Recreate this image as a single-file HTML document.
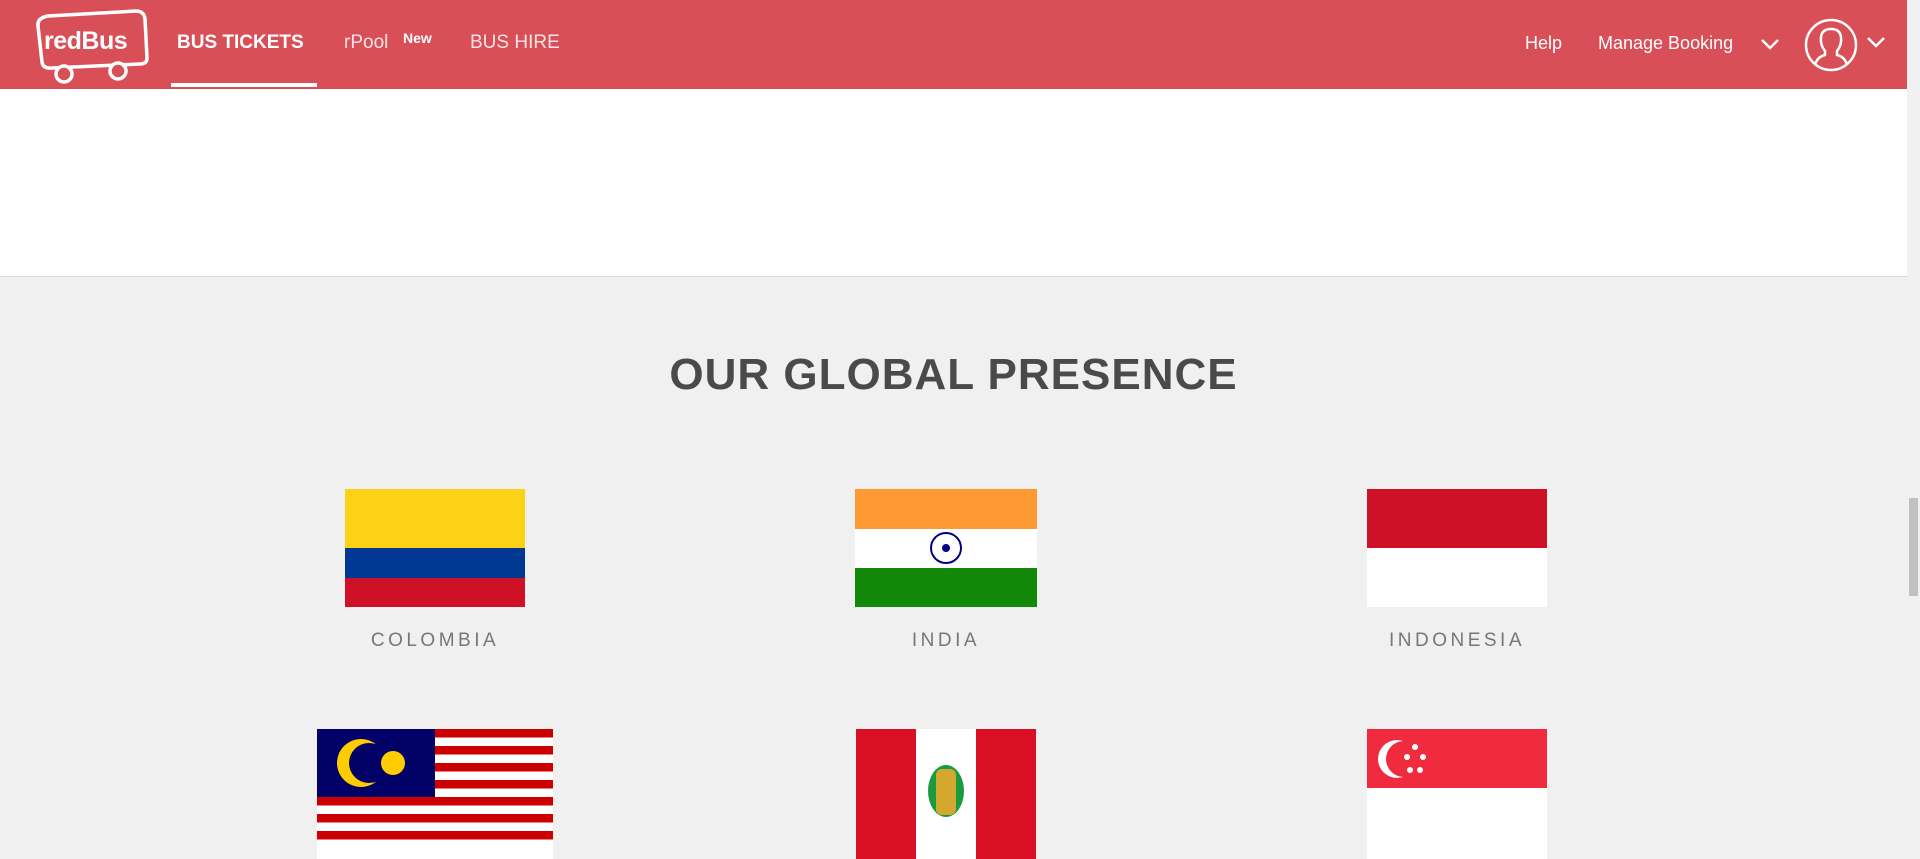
<!DOCTYPE html>
<html><head><meta charset="utf-8"><style>
*{margin:0;padding:0;box-sizing:border-box}
body{width:1920px;height:848px;overflow:hidden;background:#f0f0f0;font-family:"Liberation Sans",sans-serif;position:relative}
.hdr{position:absolute;left:0;top:0;width:1907px;height:89px;background:#d84f57;color:#fff}
.hdr span{position:absolute;font-size:19px;line-height:20px}
.white{position:absolute;left:0;top:89px;width:1907px;height:188px;background:#fff;border-bottom:1px solid #d8d8d8}
.sb{position:absolute;left:1907px;top:0;width:13px;height:848px;background:#f1f1f1}
.thumb{position:absolute;left:1909px;top:498px;width:9px;height:98px;background:#c1c1c1}
h1{position:absolute;left:0;width:1907px;top:350px;text-align:center;font-size:44px;font-weight:bold;color:#4a4a4a;letter-spacing:1px}
.flag{position:absolute}
.lbl{position:absolute;width:300px;text-align:center;font-size:19px;letter-spacing:3.5px;color:#777;top:630px}
</style></head><body>
<div class="hdr">
<svg style="position:absolute;left:30px;top:8px" width="120" height="76" viewBox="0 0 120 76">
<path d="M8 18 Q7 10 18 8 L106 3 Q114 3 115 11 L117 50 Q117 56 110 56 L22 60 Q13 61 12 54 Z" fill="none" stroke="#fff" stroke-width="3.5"/>
<text x="14" y="41" font-family="Liberation Sans" font-weight="bold" font-size="25" fill="#fff" letter-spacing="-0.5">redBus</text>
<circle cx="34" cy="66" r="8" fill="#d84f57" stroke="#fff" stroke-width="3.5"/>
<circle cx="88" cy="63" r="8" fill="#d84f57" stroke="#fff" stroke-width="3.5"/>
</svg>
<span style="left:177px;top:33px;font-weight:bold">BUS TICKETS</span>
<div style="position:absolute;left:171px;top:83px;width:146px;height:4px;background:#fff"></div>
<span style="left:344px;top:33px;color:#fbe4e5">rPool</span>
<span style="left:403px;top:28px;font-size:14px;font-weight:bold">New</span>
<span style="left:470px;top:33px;color:#fbe4e5">BUS HIRE</span>
<span style="left:1525px;top:33px;font-size:18px">Help</span>
<span style="left:1598px;top:33px;font-size:18px">Manage Booking</span>
<svg style="position:absolute;left:1760px;top:37px" width="20" height="14"><path d="M2 3 L10 11 L18 3" fill="none" stroke="#fff" stroke-width="2.5"/></svg>
<svg style="position:absolute;left:1803px;top:17px" width="56" height="56" viewBox="0 0 56 56"><circle cx="28" cy="28" r="25" fill="none" stroke="#fff" stroke-width="2.5"/><path d="M12 48 Q14 40 22 38 L22 34 Q17 28 18 20 Q19 12 28 12 Q37 12 38 20 Q39 28 34 34 L34 38 Q42 40 44 48" fill="none" stroke="#fff" stroke-width="2.5"/></svg>
<svg style="position:absolute;left:1866px;top:35px" width="20" height="14"><path d="M2 3 L10 11 L18 3" fill="none" stroke="#fff" stroke-width="2.5"/></svg>
</div>
<div class="white"></div>
<h1>OUR GLOBAL PRESENCE</h1>
<svg class="flag" style="left:345px;top:489px" width="180" height="118"><rect width="180" height="59" fill="#fcd116"/><rect y="59" width="180" height="30" fill="#003893"/><rect y="89" width="180" height="29" fill="#ce1126"/></svg>
<svg class="flag" style="left:855px;top:489px" width="182" height="118"><rect width="182" height="40" fill="#ff9933"/><rect y="40" width="182" height="39" fill="#fff"/><rect y="79" width="182" height="39" fill="#138808"/><circle cx="91" cy="59" r="15" fill="none" stroke="#000080" stroke-width="2"/><circle cx="91" cy="59" r="4" fill="#000080"/></svg>
<svg class="flag" style="left:1367px;top:489px" width="180" height="118"><rect width="180" height="59" fill="#ce1126"/><rect y="59" width="180" height="59" fill="#fff"/></svg>
<div class="lbl" style="left:285px">COLOMBIA</div>
<div class="lbl" style="left:796px">INDIA</div>
<div class="lbl" style="left:1307px">INDONESIA</div>
<svg class="flag" style="left:317px;top:729px" width="236" height="130"><rect width="236" height="130" fill="#fff"/><g fill="#cc0001"><rect y="0" width="236" height="8.5"/><rect y="17" width="236" height="8.5"/><rect y="34" width="236" height="8.5"/><rect y="51" width="236" height="8.5"/><rect y="68" width="236" height="8.5"/><rect y="85" width="236" height="8.5"/><rect y="102" width="236" height="8.5"/></g><rect width="118" height="68" fill="#010066"/><circle cx="44" cy="34" r="24" fill="#fc0"/><circle cx="52" cy="34" r="20" fill="#010066"/><circle cx="76" cy="34" r="12" fill="#fc0"/></svg>
<svg class="flag" style="left:856px;top:729px" width="180" height="130"><rect width="180" height="130" fill="#d91023"/><rect x="60" width="60" height="130" fill="#fff"/><ellipse cx="90" cy="62" rx="18" ry="26" fill="#1a9c3e"/><rect x="80" y="40" width="20" height="46" rx="6" fill="#d4a82f"/></svg>
<svg class="flag" style="left:1367px;top:729px" width="180" height="130"><rect width="180" height="130" fill="#fff"/><rect width="180" height="59" fill="#ef2b3d"/><circle cx="30" cy="30" r="19" fill="#fff"/><circle cx="37" cy="30" r="18" fill="#ef2b3d"/><g fill="#fff"><circle cx="48" cy="18" r="3"/><circle cx="40" cy="28" r="3"/><circle cx="56" cy="28" r="3"/><circle cx="43" cy="41" r="3"/><circle cx="53" cy="41" r="3"/></g></svg>
<div class="sb"></div><div class="thumb"></div>
</body></html>
